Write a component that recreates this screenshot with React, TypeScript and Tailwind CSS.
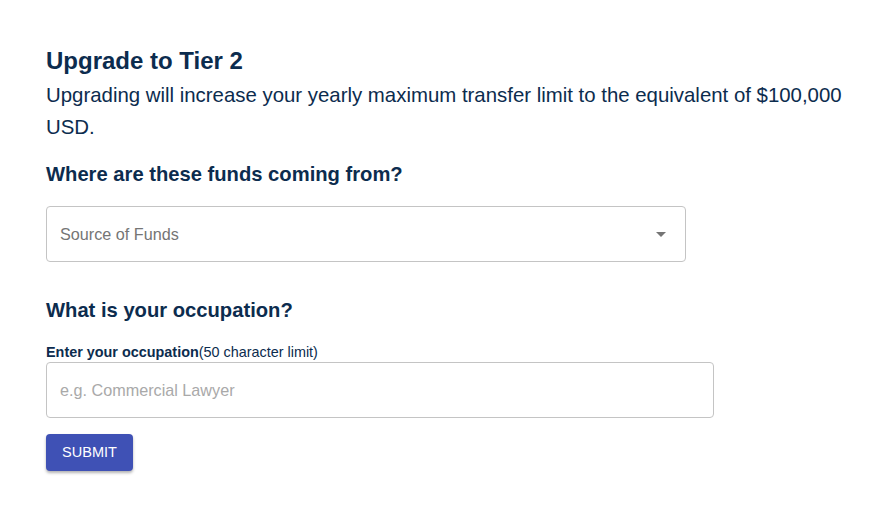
export default function App() {
  return (
    <div className="min-h-[530px] w-full bg-white font-['Liberation_Sans',Arial,sans-serif] text-[#0c2c4e]">
      <div className="px-[46px] pt-[46px]">
        <h1 className="text-[24px] font-bold leading-[30px]">Upgrade to Tier 2</h1>
        <p className="mt-[3px] w-[800px] text-[20.4px] leading-[32px]">
          Upgrading will increase your yearly maximum transfer limit to the equivalent of $100,000 USD.
        </p>

        <h2 className="mt-[18px] text-[20.2px] font-bold leading-[26px]">Where are these funds coming from?</h2>
        <div className="mt-[19px] flex h-[56px] w-[640px] items-center justify-between rounded border border-[#c4c4c4] pl-[13px] pr-[12px]">
          <span className="text-[16.2px] text-[#757575]">Source of Funds</span>
          <svg width="24" height="24" viewBox="0 0 24 24" className="fill-[#757575]">
            <path d="M7 10l5 5 5-5z" />
          </svg>
        </div>

        <h2 className="mt-[35px] text-[20.2px] font-bold leading-[26px]">What is your occupation?</h2>
        <label className="mt-[19px] block text-[14.4px] leading-[20px] text-[#0c2c4e]">
          <span className="font-bold">Enter your occupation</span>(50 character limit)
        </label>
        <div className="flex h-[56px] w-[668px] items-center rounded border border-[#c4c4c4] px-[13px]">
          <span className="text-[16.2px] text-[#a9a9a9]">e.g. Commercial Lawyer</span>
        </div>

        <button className="mt-[16px] h-[37px] w-[87px] rounded bg-[#3f51b5] text-[14.5px] uppercase text-white shadow-[0_2px_3px_rgba(0,0,0,0.3)]">
          Submit
        </button>
      </div>
    </div>
  );
}
